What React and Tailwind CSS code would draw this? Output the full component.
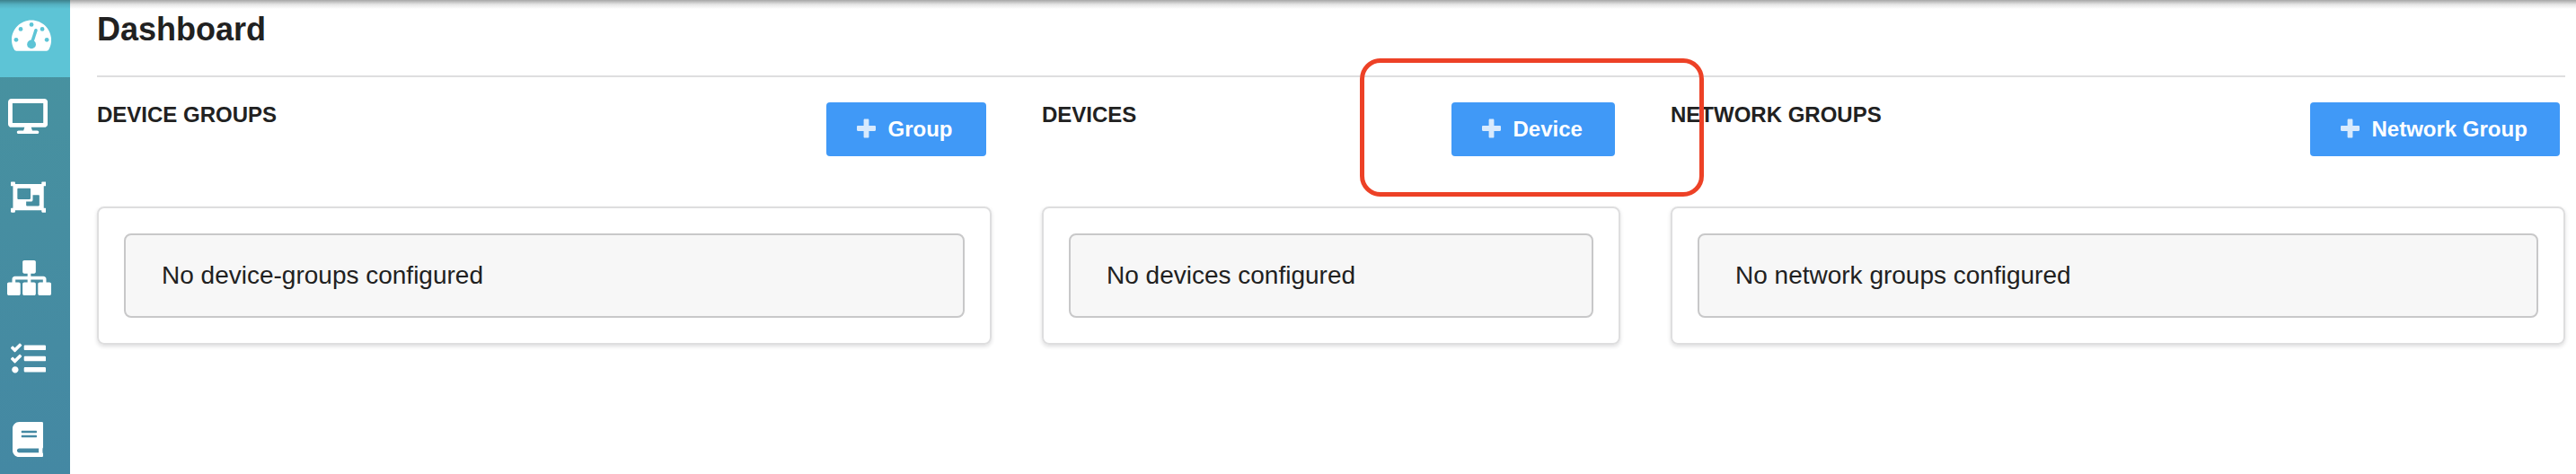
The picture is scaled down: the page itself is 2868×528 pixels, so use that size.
import React from "react";
import { FaDesktop, FaObjectGroup, FaBook } from "react-icons/fa";

function TachometerIcon({ className }) {
  return (
    <svg viewBox="0 0 576 512" className={className} aria-hidden="true">
      <path
        fill="currentColor"
        d="M288 32C128.94 32 0 160.94 0 320c0 52.8 14.25 102.26 39.06 144.8 5.61 9.62 16.3 15.2 27.44 15.2h443c11.14 0 21.83-5.58 27.44-15.2C561.75 422.26 576 372.8 576 320c0-159.06-128.94-288-288-288z"
      />
      <g fill="#5dc4d6">
        <circle cx="288" cy="97" r="31" />
        <circle cx="131" cy="163" r="31" />
        <circle cx="445" cy="163" r="31" />
        <circle cx="65" cy="318" r="31" />
        <circle cx="511" cy="318" r="31" />
        <circle cx="288" cy="384" r="64" />
      </g>
      <path d="M290 372 352 180" fill="none" stroke="#5dc4d6" strokeWidth="46" strokeLinecap="round" />
    </svg>
  );
}

function SitemapIcon({ className }) {
  return (
    <svg viewBox="0 0 640 512" className={className} aria-hidden="true">
      <path
        fill="currentColor"
        d="M616 320h-48v-48c0-22.056-17.944-40-40-40H344v-40h48c13.255 0 24-10.745 24-24V24c0-13.255-10.745-24-24-24H248c-13.255 0-24 10.745-24 24v144c0 13.255 10.745 24 24 24h48v40H112c-22.056 0-40 17.944-40 40v48H24c-13.255 0-24 10.745-24 24v144c0 13.255 10.745 24 24 24h144c13.255 0 24-10.745 24-24V344c0-13.255-10.745-24-24-24h-48v-40h176v40h-48c-13.255 0-24 10.745-24 24v144c0 13.255 10.745 24 24 24h144c13.255 0 24-10.745 24-24V344c0-13.255-10.745-24-24-24h-48v-40h176v40h-48c-13.255 0-24 10.745-24 24v144c0 13.255 10.745 24 24 24h144c13.255 0 24-10.745 24-24V344c0-13.255-10.745-24-24-24z"
      />
    </svg>
  );
}

function TasksIcon({ className }) {
  return (
    <svg viewBox="0 0 512 512" className={className} aria-hidden="true">
      <path
        fill="currentColor"
        d="M208 132h288c8.8 0 16-7.2 16-16V76c0-8.8-7.2-16-16-16H208c-8.8 0-16 7.2-16 16v40c0 8.8 7.2 16 16 16zm0 160h288c8.8 0 16-7.2 16-16v-40c0-8.8-7.2-16-16-16H208c-8.8 0-16 7.2-16 16v40c0 8.8 7.2 16 16 16zm0 160h288c8.8 0 16-7.2 16-16v-40c0-8.8-7.2-16-16-16H208c-8.8 0-16 7.2-16 16v40c0 8.8 7.2 16 16 16zM64 368c-26.5 0-48.6 21.5-48.6 48s22.1 48 48.6 48 48-21.5 48-48-21.5-48-48-48zm92.5-299l-72.2 72.2-15.6 15.6c-4.7 4.7-12.9 4.7-17.6 0L3.5 109.4c-4.7-4.7-4.7-12.3 0-17l15.7-15.7c4.7-4.7 12.3-4.7 17 0l22.7 22.1 63.7-63.3c4.7-4.7 12.3-4.7 17 0l17 16.5c4.6 4.7 4.6 12.3-.1 17zm0 159.6l-72.2 72.2-15.7 15.7c-4.7 4.7-12.9 4.7-17.6 0L3.5 269c-4.7-4.7-4.7-12.3 0-17l15.7-15.7c4.7-4.7 12.3-4.7 17 0l22.7 22.1 63.7-63.7c4.7-4.7 12.3-4.7 17 0l17 17c4.6 4.6 4.6 12.2-.1 16.9z"
      />
    </svg>
  );
}

function PlusIcon({ className }) {
  return (
    <svg viewBox="0 0 448 512" className={className} aria-hidden="true">
      <path
        fill="currentColor"
        d="M448 294.2v-76.4c0-13.3-10.7-24-24-24H286.2V56c0-13.3-10.7-24-24-24h-76.4c-13.3 0-24 10.7-24 24v137.8H24c-13.3 0-24 10.7-24 24v76.4c0 13.3 10.7 24 24 24h137.8V456c0 13.3 10.7 24 24 24h76.4c13.3 0 24-10.7 24-24V318.2H424c13.3 0 24-10.7 24-24z"
      />
    </svg>
  );
}

const navItems = [
  { name: "Devices", Icon: FaDesktop, size: "w-[44.1px]" },
  { name: "Device groups", Icon: FaObjectGroup, size: "w-[39.2px]" },
  { name: "Network", Icon: SitemapIcon, size: "w-[49px]" },
  { name: "Tasks", Icon: TasksIcon, size: "w-[39.2px]" },
  { name: "Docs", Icon: FaBook, size: "w-[34.3px]" },
];

const sections = [
  { title: "DEVICE GROUPS", action: "Group", empty: "No device-groups configured", width: "w-[996px]", buttonWidth: "w-[178px]" },
  { title: "DEVICES", action: "Device", empty: "No devices configured", width: "w-[644px]", buttonWidth: "w-[182px]", highlighted: true },
  { title: "NETWORK GROUPS", action: "Network Group", empty: "No network groups configured", width: "w-[996px]", buttonWidth: "w-[278px]" },
];

function Sidebar() {
  return (
    <nav className="flex h-full w-[78px] shrink-0 flex-col bg-linear-to-b from-[#48939f] to-[#4488a3] text-white">
      <div className="flex h-[86px] shrink-0 items-center justify-center bg-[#5dc4d6] pb-[7px] pr-[8px]">
        <TachometerIcon className="h-[39.2px] w-[44.1px]" />
      </div>
      {navItems.map(({ name, Icon, size }) => (
        <div key={name} className="flex h-[89.9px] shrink-0 items-center pb-[2.5px] pl-[8px]">
          <div className="flex w-[46.3px] [justify-content:safe_center]">
            <Icon className={`h-[39.2px] shrink-0 ${size}`} />
          </div>
        </div>
      ))}
    </nav>
  );
}

function AddButton({ label, width }) {
  return (
    <button className={`mr-[6px] mt-[4px] flex h-[60px] items-center rounded-[4px] bg-[#4099f7] pl-[34px] text-2xl font-bold text-white ${width}`}>
      <PlusIcon className="mb-[2px] mr-[13.5px] h-[24px] w-[21px] shrink-0 opacity-80" />
      <span className="whitespace-nowrap leading-[28px]">{label}</span>
    </button>
  );
}

function Section({ title, action, empty, width, buttonWidth, highlighted }) {
  return (
    <section className={`shrink-0 ${width}`}>
      <div className="relative flex h-[120px] items-start justify-between">
        <h2 className="pt-[4px] text-2xl font-bold leading-[28px]">{title}</h2>
        <AddButton label={action} width={buttonWidth} />
        {highlighted && (
          <div className="pointer-events-none absolute -right-[93px] -top-[45px] z-10 h-[154px] w-[383px] rounded-[23px] border-[5px] border-[#ed4126]" />
        )}
      </div>
      <div className="h-[154px] rounded-[8px] border-2 border-[#dededf] p-[28px] shadow-[0_2px_4px_0_rgba(34,36,38,0.15)]">
        <div className="flex h-[94px] items-center rounded-[8px] border-2 border-[#c8c8c9] bg-[#f7f7f7] px-[40px] text-[28px] leading-[38px]">
          {empty}
        </div>
      </div>
    </section>
  );
}

export default function App() {
  return (
    <div className="relative flex h-[528px] w-[2868px] overflow-hidden bg-white font-['Liberation_Sans',Arial,sans-serif] text-[#212121]">
      <Sidebar />
      <main className="ml-[30px] w-[2748px]">
        <header className="h-[86px] border-b-2 border-[#dededf] pt-[13px]">
          <h1 className="text-4xl font-bold leading-[40px]">Dashboard</h1>
        </header>
        <div className="flex gap-[56px] pt-[24px]">
          {sections.map((section) => (
            <Section key={section.title} {...section} />
          ))}
        </div>
      </main>
      <div className="absolute inset-x-0 top-0 h-[10px] bg-linear-to-b from-black/35 via-black/10 to-transparent" />
    </div>
  );
}
